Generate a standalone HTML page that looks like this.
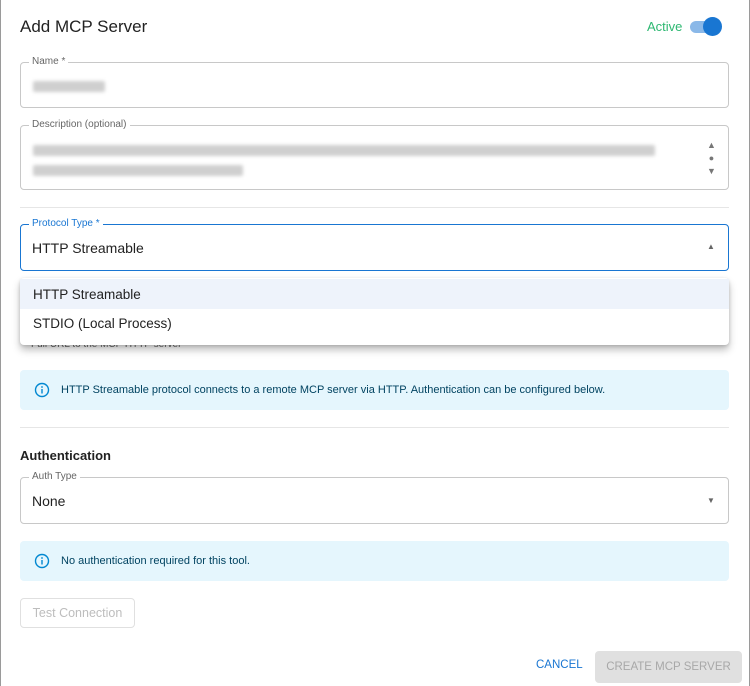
<!DOCTYPE html>
<html><head><style>
*{box-sizing:border-box;margin:0;padding:0}
body{width:750px;height:686px;background:#fff;font-family:"Liberation Sans",sans-serif;position:relative;overflow:hidden;color:rgba(0,0,0,.87)}
.frame{position:absolute;left:0;top:0;width:750px;height:686px;border-left:1px solid #9a9a9a;border-right:1px solid #9a9a9a}
.abs{position:absolute}
.field{position:absolute;left:20px;width:709px;border:1px solid #c8c8c8;border-radius:4px}
.lbl{position:absolute;left:8px;top:-7px;background:#fff;padding:0 3px;font-size:10px;color:#666;line-height:12px}
.blur{position:absolute;height:11px;background:#cfcfcf;filter:blur(1.8px);border-radius:2px}
.alert{position:absolute;left:20px;width:709px;background:#e5f6fd;border-radius:4px;font-size:11px;color:#014361}
.alert svg{position:absolute;left:14px}
.div{position:absolute;left:20px;width:709px;height:1px;background:#e6e6e6}
</style></head><body>
<div class="frame"></div>
<div class="abs" style="left:20px;top:17px;font-size:17px;color:#222">Add MCP Server</div>
<div class="abs" style="left:647px;top:19px;font-size:13px;color:#2eb872">Active</div>
<div class="abs" style="left:690px;top:21px;width:30px;height:12px;border-radius:6px;background:#8ab8e8"></div>
<div class="abs" style="left:703px;top:17px;width:19px;height:19px;border-radius:50%;background:#1976d2"></div>

<div class="field" style="top:62px;height:46px"><span class="lbl">Name *</span>
<div class="blur" style="left:12px;top:18px;width:72px"></div></div>
<div class="field" style="top:125px;height:65px"><span class="lbl">Description (optional)</span>
<div class="blur" style="left:12px;top:19px;width:622px"></div>
<div class="blur" style="left:12px;top:39px;width:210px"></div>
<div class="abs" style="left:686px;top:13px;font-size:9px;color:#777;line-height:13px;text-align:center">▲<br>●<br>▼</div></div>
<div class="div" style="top:207px"></div>

<div class="field" style="top:224px;height:47px;border:1.5px solid #1976d2"><span class="lbl" style="color:#1976d2">Protocol Type *</span>
<div class="abs" style="left:11px;top:15px;font-size:14px;color:#222">HTTP Streamable</div>
<div class="abs" style="left:686px;top:17px;font-size:8px;color:#666">▲</div></div>

<div class="abs" style="left:31px;top:339px;font-size:10px;color:#666">Full URL to the MCP HTTP server</div>
<div class="abs" style="left:20px;top:278px;width:709px;height:67px;background:#fff;border-radius:4px;box-shadow:0 5px 8px rgba(0,0,0,.25),0 1px 3px rgba(0,0,0,.15)">
<div class="abs" style="left:0;top:1px;width:709px;height:30px;background:#eef3fb"></div>
<div class="abs" style="left:13px;top:9px;font-size:13.5px;color:#222">HTTP Streamable</div>
<div class="abs" style="left:13px;top:38px;font-size:13.5px;color:#222">STDIO (Local Process)</div>
</div>

<div class="alert" style="top:370px;height:40px">
<svg style="top:12px" width="16" height="16" viewBox="0 0 16 16"><circle cx="8" cy="8" r="6.5" fill="none" stroke="#0288d1" stroke-width="1.4"/><rect x="7.3" y="7" width="1.4" height="4.5" fill="#0288d1"/><circle cx="8" cy="5" r=".9" fill="#0288d1"/></svg>
<div class="abs" style="left:41px;top:14px">HTTP Streamable protocol connects to a remote MCP server via HTTP. Authentication can be configured below.</div></div>
<div class="div" style="top:427px"></div>

<div class="abs" style="left:20px;top:448px;font-size:13px;font-weight:bold;color:#222">Authentication</div>
<div class="field" style="top:477px;height:47px"><span class="lbl">Auth Type</span>
<div class="abs" style="left:11px;top:15px;font-size:14px;color:#222">None</div>
<div class="abs" style="left:686px;top:18px;font-size:8px;color:#666">▼</div></div>

<div class="alert" style="top:541px;height:40px">
<svg style="top:12px" width="16" height="16" viewBox="0 0 16 16"><circle cx="8" cy="8" r="6.5" fill="none" stroke="#0288d1" stroke-width="1.4"/><rect x="7.3" y="7" width="1.4" height="4.5" fill="#0288d1"/><circle cx="8" cy="5" r=".9" fill="#0288d1"/></svg>
<div class="abs" style="left:41px;top:14px">No authentication required for this tool.</div></div>

<div class="abs" style="left:20px;top:598px;width:115px;height:30px;border:1px solid #e0e0e0;border-radius:4px;font-size:12.5px;color:#bdbdbd;text-align:center;line-height:28px">Test Connection</div>
<div class="abs" style="left:536px;top:659px;font-size:11.5px;color:#1976d2">CANCEL</div>
<div class="abs" style="left:595px;top:651px;width:147px;height:32px;background:#e0e0e0;border-radius:4px;font-size:11.5px;color:#a8a8a8;text-align:center;line-height:32px">CREATE MCP SERVER</div>
</body></html>
